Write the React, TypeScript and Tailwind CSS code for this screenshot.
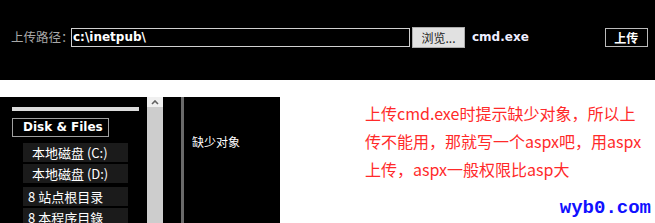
import React from 'react';

const cjk = "font-['Tahoma','DejaVu_Sans','Noto_Sans_CJK_SC',sans-serif]";

const DiskItem = ({ label, indent }: { label: string; indent?: boolean }) => (
  <div
    className={`w-[105px] h-[19px] bg-[#1b1b1b] text-white text-[13px] leading-[19px] ${indent ? 'pl-[9px]' : 'pl-[5px]'} font-['Noto_Sans_CJK_SC',sans-serif]`}
  >
    {label}
  </div>
);

export default function App() {
  return (
    <div className="w-[655px] h-[223px] bg-white overflow-hidden relative">
      {/* upload bar */}
      <div className="h-[80px] bg-black flex items-center pl-[11px] pb-[6px]">
        <span className="shrink-0 whitespace-nowrap text-[#a8a8a8] text-[12.5px] font-['Noto_Sans_CJK_SC',sans-serif] w-[60px]">上传路径：</span>
        <div className="w-[339px] h-[19px] border border-[#d0d0d0] flex items-center pl-[1px] text-white text-[12px] font-bold font-['DejaVu_Sans',sans-serif]">
          c:\inetpub\
        </div>
        <button className="ml-[2px] w-[53px] h-[21px] bg-[#e1e1e1] border border-[#adadad] text-[#222] text-[12px] leading-[19px] font-['Noto_Sans_CJK_SC',sans-serif]">
          浏览...
        </button>
        <span className="ml-[7px] text-[#eef] text-[12px] font-bold font-['DejaVu_Sans',sans-serif]">cmd.exe</span>
        <button className="ml-[76px] w-[43px] h-[19px] border border-[#bbb] text-white text-[12px] leading-[17px] font-bold font-['Noto_Sans_CJK_SC',sans-serif]">
          上传
        </button>
      </div>

      <div className="flex mt-[17px]">
        {/* file manager panel */}
        <div className="w-[280px] h-[126px] bg-black flex">
          <div className="w-[147px] pt-[10px] pl-[12px]">
            <div className="w-[127px] h-[4px] bg-[#dcdcdc]" />
            <div className="mt-[7px] w-[97px] h-[19px] border border-[#a0a0a0] text-white text-[12px] font-bold leading-[17px] pl-[10px] font-['DejaVu_Sans',sans-serif]">
              Disk &amp; Files
            </div>
            <div className="ml-[11px] mt-[6px] flex flex-col">
              <DiskItem label="本地磁盘 (C:)" indent />
              <div className="h-[2px]" />
              <DiskItem label="本地磁盘 (D:)" indent />
              <div className="h-[4px]" />
              <DiskItem label="8 站点根目录" />
              <div className="h-[2px]" />
              <DiskItem label="8 本程序目錄" />
            </div>
          </div>
          {/* scrollbar */}
          <div className="w-[16px] flex flex-col">
            <div className="h-[10px] bg-[#f0f0f0] flex items-center justify-center">
              <svg width="8" height="5" viewBox="0 0 8 5">
                <path d="M1 4 L4 1 L7 4" stroke="#606060" strokeWidth="1.6" fill="none" />
              </svg>
            </div>
            <div className="flex-1 bg-[#cdcdcd]" />
          </div>
          <div className="w-[18px]" />
          <div className="w-[3px] bg-[#6a6a6a]" />
          <div className={`flex-1 pl-[8px] pt-[37px] text-white text-[12px] ${cjk}`}>缺少对象</div>
        </div>

        {/* note */}
        <div className="flex-1 pl-[85px] pt-[2px] text-[#ff2a2a] text-[16px] leading-[28px] font-['Noto_Sans_CJK_SC',sans-serif]">
          <div>上传cmd.exe时提示缺少对象，所以上</div>
          <div>传不能用，那就写一个aspx吧，用aspx</div>
          <div>上传，aspx一般权限比asp大</div>
        </div>
      </div>

      <div className="absolute right-[4px] bottom-[1px] text-[#1010ff] text-[19px] font-bold font-['Liberation_Mono',monospace]">
        wyb0.com
      </div>
    </div>
  );
}
